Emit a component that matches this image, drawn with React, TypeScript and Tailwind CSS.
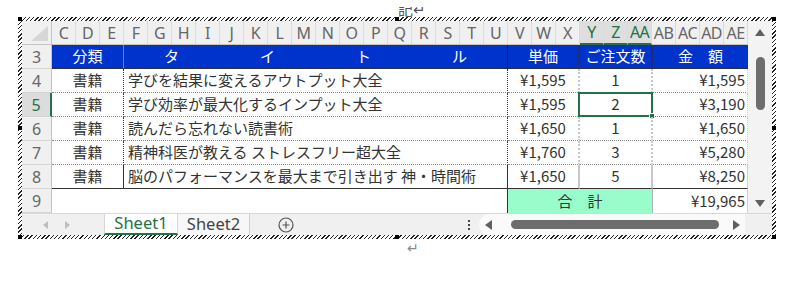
import React from 'react';

const COLS = ['C','D','E','F','G','H','I','J','K','L','M','N','O','P','Q','R','S','T','U','V','W','X','Y','Z','AA','AB','AC','AD','AE'];
const SEL_COLS = ['Y', 'Z', 'AA'];

const ROWS = [
  { n: 4, title: '学びを結果に変えるアウトプット大全', price: '¥1,595', qty: '1', total: '¥1,595' },
  { n: 5, title: '学び効率が最大化するインプット大全', price: '¥1,595', qty: '2', total: '¥3,190' },
  { n: 6, title: '読んだら忘れない読書術', price: '¥1,650', qty: '1', total: '¥1,650' },
  { n: 7, title: '精神科医が教える ストレスフリー超大全', price: '¥1,760', qty: '3', total: '¥5,280' },
  { n: 8, title: '脳のパフォーマンスを最大まで引き出す 神・時間術', price: '¥1,650', qty: '5', total: '¥8,250' },
];

const jp = "font-['Noto_Sans_CJK_JP','Noto_Sans',sans-serif]";

const Handle = ({ className }: { className: string }) => (
  <div className={`absolute w-[4px] h-[4px] bg-black ${className}`} />
);

const RowHead = ({ n, selected }: { n: number; selected?: boolean }) => (
  <div
    className={`w-[30px] h-[24px] shrink-0 flex items-center justify-center text-[16px] font-['Noto_Sans',sans-serif] border-b border-[#d4d4d4] ${
      selected
        ? 'bg-[#dcdcdc] text-[#217346] border-r-2 border-r-[#217346]'
        : 'bg-[#f0f0f0] text-[#666] border-r border-r-[#c4c4c4]'
    }`}
  >
    {n}
  </div>
);

export default function App() {
  return (
    <div className={`w-[800px] h-[281px] bg-white ${jp}`}>
      <div className="h-[17px] pt-[7px] pl-[398px]">
        <div className="h-[10px] overflow-hidden">
          <div className="mt-[-7px] text-[15px] leading-[17px] text-[#555]">記↵</div>
        </div>
      </div>

      <div className="pl-[18px]">
        <div className="relative w-[758px] h-[222px] p-[4px] bg-[image:repeating-linear-gradient(-45deg,#222_0px,#222_1px,#fff_1px,#fff_3px)]">
          <Handle className="left-0 top-0" />
          <Handle className="left-[377px] top-0" />
          <Handle className="right-0 top-0" />
          <Handle className="left-0 top-[109px]" />
          <Handle className="right-0 top-[109px]" />
          <Handle className="left-0 bottom-0" />
          <Handle className="left-[377px] bottom-0" />
          <Handle className="right-0 bottom-0" />

          <div className="w-[750px] h-[214px] bg-white flex flex-col">
            <div className="flex h-[192px]">
              <div className="w-[726px] flex flex-col">
                {/* column letters */}
                <div className="flex h-[24px]">
                  <div className="w-[30px] h-[24px] bg-[#f0f0f0] border-r border-b border-[#c4c4c4] flex items-end justify-end p-[3px]">
                    <svg width="17" height="15" viewBox="0 0 17 15">
                      <polygon points="17,0 17,15 0,15" fill="#d6d6d6" />
                    </svg>
                  </div>
                  {COLS.map((c) => {
                    const sel = SEL_COLS.includes(c);
                    return (
                      <div
                        key={c}
                        className={`w-[24px] h-[24px] flex items-center justify-center text-[16px] tracking-[-0.6px] font-['Noto_Sans',sans-serif] border-r border-r-[#dadada] ${
                          sel
                            ? 'bg-[#dedede] text-[#217346] border-b-2 border-b-[#217346]'
                            : 'bg-[#f0f0f0] text-[#666] border-b border-b-[#c4c4c4]'
                        }`}
                      >
                        {c}
                      </div>
                    );
                  })}
                </div>

                {/* row 3 header */}
                <div className="flex h-[24px]">
                  <RowHead n={3} />
                  <div className="w-[72px] h-[24px] bg-[#0033cc] text-white text-[15px] flex items-center justify-center border-r border-r-[#5d7de0] border-b border-b-[#303030]">分類</div>
                  <div className="w-[384px] h-[24px] bg-[#0033cc] text-white text-[15px] flex items-center justify-between px-[40px] border-r border-r-[#1a1a40] border-b border-b-[#303030]">
                    <span>タ</span><span>イ</span><span>ト</span><span>ル</span>
                  </div>
                  <div className="w-[72px] h-[24px] bg-[#0033cc] text-white text-[15px] flex items-center justify-center border-r-2 border-r-[#1f2e70] border-b border-b-[#303030]">単価</div>
                  <div className="w-[73px] h-[24px] bg-[#0033cc] text-white text-[15px] flex items-center justify-center border-r-2 border-r-[#1f2e70] border-b border-b-[#303030]">ご注文数</div>
                  <div className="w-[95px] h-[24px] bg-[#0033cc] text-white text-[15px] flex items-center justify-center border-b border-b-[#303030]">金　額</div>
                </div>

                {ROWS.map((r) => {
                  const last = r.n === 8;
                  const bb = last ? 'border-b border-b-[#333]' : 'border-b border-dotted border-b-[#8a8a8a]';
                  return (
                    <div key={r.n} className="flex h-[24px] text-[15px] text-[#333]">
                      <RowHead n={r.n} selected={r.n === 5} />
                      <div className={`w-[72px] h-[24px] flex items-center justify-center border-r border-r-[#333] ${bb}`}>書籍</div>
                      <div className={`w-[384px] h-[24px] flex items-center pl-[4px] whitespace-nowrap border-r border-r-[#333] ${bb}`}>{r.title}</div>
                      <div className={`w-[72px] h-[24px] flex items-center justify-center border-r-2 border-r-[#c8c8c8] ${bb}`}>{r.price}</div>
                      <div className={`relative w-[73px] h-[24px] flex items-center justify-center border-r-2 border-r-[#c8c8c8] ${bb}`}>
                        {r.qty}
                        {r.n === 5 && (
                          <>
                            <div className="absolute left-[-2px] top-[-1px] right-[-2px] bottom-[-1px] border-2 border-[#217346]" />
                            <div className="absolute right-[-4px] bottom-[-3px] w-[6px] h-[6px] bg-[#217346] border border-white" />
                          </>
                        )}
                      </div>
                      <div className={`w-[95px] h-[24px] flex items-center justify-end pr-[2px] border-r border-r-[#d0d0d0] ${bb}`}>{r.total}</div>
                    </div>
                  );
                })}

                {/* row 9 */}
                <div className="flex h-[24px] text-[15px] text-[#333]">
                  <RowHead n={9} />
                  <div className="w-[456px] h-[24px] border-r border-r-[#333]" />
                  <div className="w-[145px] h-[24px] bg-[#99fdcb] flex items-center justify-center border-r border-r-[#b0b0b0]">合　計</div>
                  <div className="w-[95px] h-[24px] flex items-center justify-end pr-[2px] border-r border-r-[#d0d0d0]">¥19,965</div>
                </div>
              </div>

              {/* vertical scrollbar */}
              <div className="w-[24px] h-[192px] bg-[#f3f3f3] flex flex-col items-center">
                <svg className="mt-[8px]" width="10" height="7" viewBox="0 0 10 7">
                  <polygon points="5,0 10,7 0,7" fill="#606060" />
                </svg>
                <div className="mt-[21px] w-[9px] h-[53px] rounded-full bg-[#6d6d6d]" />
                <div className="flex-1" />
                <svg className="mb-[6px]" width="10" height="7" viewBox="0 0 10 7">
                  <polygon points="0,0 10,0 5,7" fill="#606060" />
                </svg>
              </div>
            </div>

            {/* sheet tab bar */}
            <div className="flex h-[22px] bg-[#f0f0f0] border-t border-[#d8d8d8] font-['Noto_Sans',sans-serif]">
              <div className="w-[82px] flex items-center pl-[21px] gap-[17px]">
                <svg width="5" height="8" viewBox="0 0 5 8"><polygon points="5,0 5,8 0,4" fill="#bdbdbd" /></svg>
                <svg width="5" height="8" viewBox="0 0 5 8"><polygon points="0,0 5,4 0,8" fill="#bdbdbd" /></svg>
              </div>
              <div className="w-[74px] h-[21px] bg-white text-[#217346] text-[16.5px] leading-none flex items-center justify-center border-b-2 border-[#217346] border-x border-x-[#d8d8d8]">Sheet1</div>
              <div className="w-[72px] h-[21px] bg-[#f7f7f7] text-[#444] text-[16.5px] leading-none flex items-center justify-center border-r border-[#cfcfcf]">Sheet2</div>
              <div className="w-[72px] flex items-center justify-center">
                <svg width="16" height="16" viewBox="0 0 16 16">
                  <circle cx="8" cy="8" r="7" fill="none" stroke="#555" strokeWidth="1.2" />
                  <path d="M8 4.5v7M4.5 8h7" stroke="#555" strokeWidth="1.2" />
                </svg>
              </div>
              <div className="w-[137px]" />
              <div className="w-[20px] flex flex-col items-center justify-center gap-[2px]">
                <div className="w-[2px] h-[2px] bg-[#444]" />
                <div className="w-[2px] h-[2px] bg-[#444]" />
                <div className="w-[2px] h-[2px] bg-[#444]" />
              </div>
              <div className="w-[266px] h-[21px] bg-[#fafafa] rounded-l-full flex items-center pl-[6px]">
                <svg width="7" height="10" viewBox="0 0 7 10"><polygon points="7,0 7,10 0,5" fill="#606060" /></svg>
                <div className="ml-[19px] w-[208px] h-[9px] rounded-full bg-[#6d6d6d]" />
                <svg className="ml-[14px]" width="7" height="10" viewBox="0 0 7 10"><polygon points="0,0 7,5 0,10" fill="#606060" /></svg>
              </div>
              <div className="flex-1" />
            </div>
          </div>
        </div>
      </div>

      <div className="pl-[407px] pt-[1px] text-[14px] leading-[14px] text-[#888]">↵</div>
    </div>
  );
}
